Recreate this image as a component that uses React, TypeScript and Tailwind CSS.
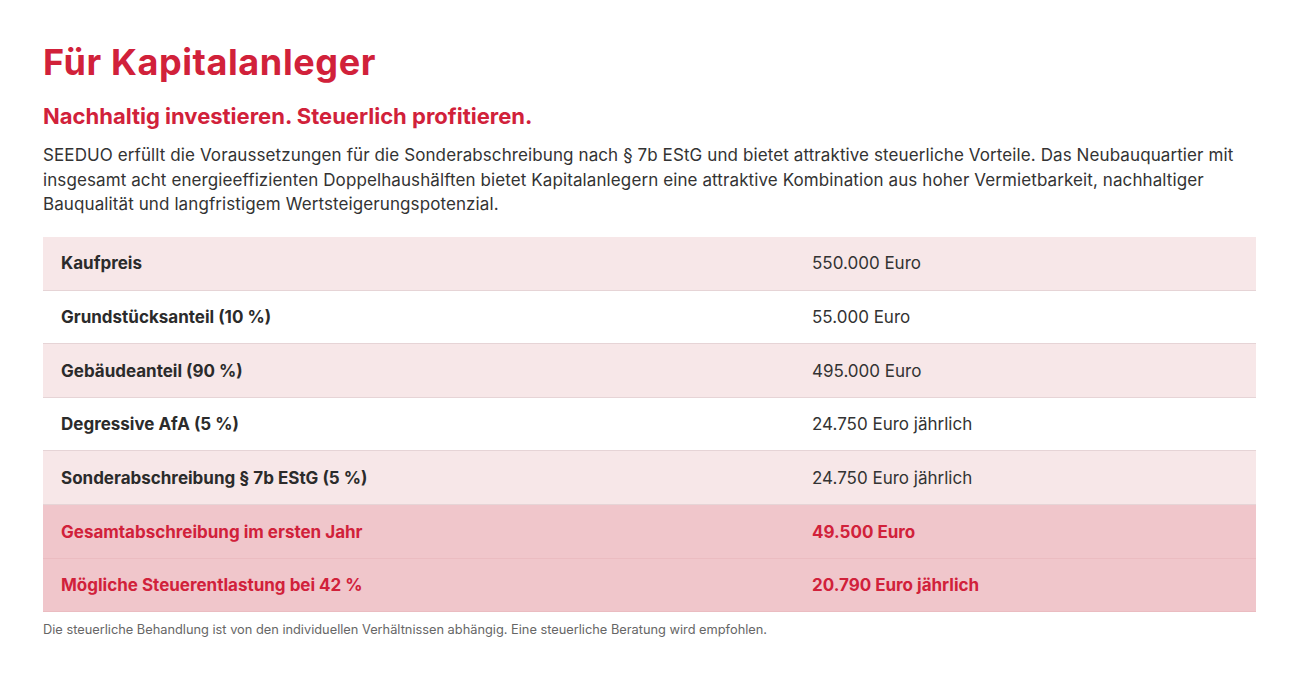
import React from 'react'

interface Row {
  label: string
  value: string
  tone: 'light' | 'white' | 'highlight'
}

const rows: Row[] = [
  { label: 'Kaufpreis', value: '550.000 Euro', tone: 'light' },
  { label: 'Grundstücksanteil (10 %)', value: '55.000 Euro', tone: 'white' },
  { label: 'Gebäudeanteil (90 %)', value: '495.000 Euro', tone: 'light' },
  { label: 'Degressive AfA (5 %)', value: '24.750 Euro jährlich', tone: 'white' },
  { label: 'Sonderabschreibung § 7b EStG (5 %)', value: '24.750 Euro jährlich', tone: 'light' },
  { label: 'Gesamtabschreibung im ersten Jahr', value: '49.500 Euro', tone: 'highlight' },
  { label: 'Mögliche Steuerentlastung bei 42 %', value: '20.790 Euro jährlich', tone: 'highlight' },
]

const rowClass = (tone: Row['tone']) => {
  switch (tone) {
    case 'light':
      return 'bg-[#f7e7e8] border-b border-[#e6d4d6]'
    case 'white':
      return 'bg-white border-b border-[#e6d4d6]'
    default:
      return 'bg-[#f0c6cb] border-b border-[#ebbcc1]'
  }
}

export default function App() {
  return (
    <div className="min-h-screen bg-white px-[43px] pt-[38px] font-['Inter',sans-serif] text-[#333]">
      <h1 className="text-[36px] font-bold leading-[48px] tracking-[0.6px] text-[#d1213a]">Für Kapitalanleger</h1>
      <h2 className="mt-[15px] text-[22px] font-bold leading-[30px] text-[#d1213a]">
        Nachhaltig investieren. Steuerlich profitieren.
      </h2>
      <p className="mt-[12px] text-[17px] leading-[24.5px] tracking-[0.1px] text-[#333]">
        SEEDUO erfüllt die Voraussetzungen für die Sonderabschreibung nach § 7b EStG und bietet attraktive steuerliche
        Vorteile. Das Neubauquartier mit insgesamt acht energieeffizienten Doppelhaushälften bietet Kapitalanlegern eine
        attraktive Kombination aus hoher Vermietbarkeit, nachhaltiger Bauqualität und langfristigem
        Wertsteigerungspotenzial.
      </p>

      <table className="mt-[20px] w-full border-collapse">
        <tbody>
          {rows.map((row) => (
            <tr key={row.label} className={`h-[53.6px] ${rowClass(row.tone)}`}>
              <td
                className={`w-[752px] pl-[18px] pt-[2px] text-[17px] font-bold ${
                  row.tone === 'highlight' ? 'text-[#d1213a]' : 'text-[#2b2b2b]'
                }`}
              >
                {row.label}
              </td>
              <td
                className={`pl-[17px] pt-[2px] text-[17px] ${
                  row.tone === 'highlight' ? 'font-bold text-[#d1213a]' : 'text-[#333]'
                }`}
              >
                {row.value}
              </td>
            </tr>
          ))}
        </tbody>
      </table>

      <p className="mt-[9px] text-[12.8px] leading-[18px] text-[#666]">
        Die steuerliche Behandlung ist von den individuellen Verhältnissen abhängig. Eine steuerliche Beratung wird
        empfohlen.
      </p>
    </div>
  )
}
